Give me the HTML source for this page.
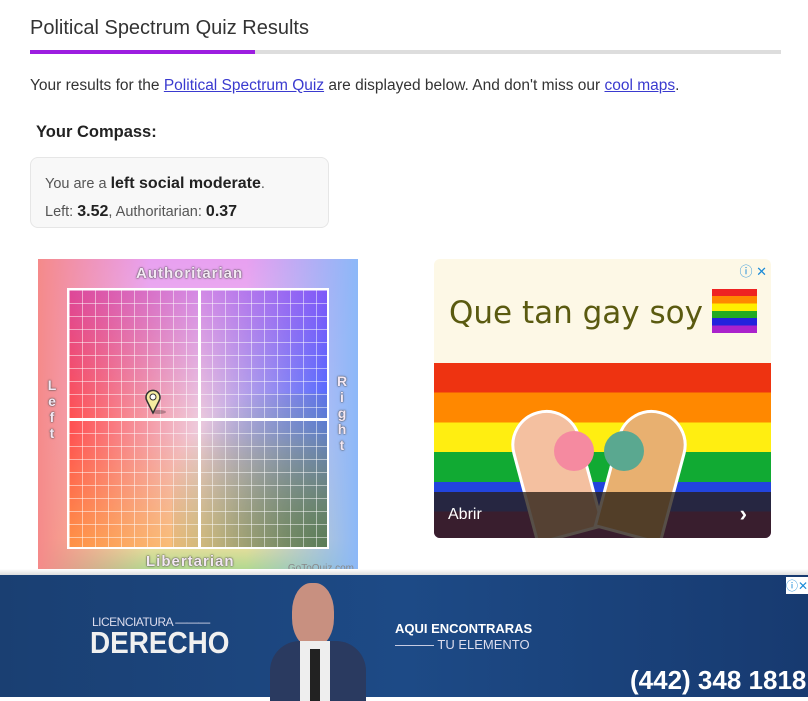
<!DOCTYPE html>
<html><head><meta charset="utf-8"><style>
*{margin:0;padding:0;box-sizing:border-box}
body{width:808px;height:697px;overflow:hidden;background:#fff;font-family:"Liberation Sans",Arial,sans-serif;color:#333;position:relative}
a{color:#3a3acf;text-decoration:underline}
.h{position:absolute;left:30px;top:17px;font-size:20px;color:#333}
.bar{position:absolute;left:30px;top:50px;width:751px;height:4px;background:#ddd}
.bar i{display:block;width:225px;height:4px;background:#9c1de0}
.p{position:absolute;left:30px;top:77px;font-size:15.5px;color:#333}
.yc{position:absolute;left:36px;top:123px;font-size:16.5px;font-weight:bold;color:#222}
.box{position:absolute;left:30px;top:157px;width:299px;height:71px;border:1px solid #e6e6e6;border-radius:8px;background:#f8f8f8;padding:12px 14px;font-size:14.5px;color:#555;line-height:27px}
.box b{color:#222;font-size:16px}
.cmp{position:absolute;left:38px;top:259px;width:320px;height:311px;background:linear-gradient(90deg,#f58a8a 0%,rgba(245,138,138,0) 35%,rgba(140,170,250,0) 65%,#8cb8f8 100%),linear-gradient(180deg,#e8a0f0 0%,#f0c8f0 50%,#f8e0a0 90%,#b0d890 100%)}
.lbl{position:absolute;font-weight:bold;color:#f4e8f4;font-size:15px;letter-spacing:1px;text-shadow:0 0 2px #555,0 0 1px #333}
.grid{position:absolute;left:29px;top:29px;width:262px;height:261px;border:2px solid #fff;overflow:hidden;
background:
linear-gradient(0deg,rgba(255,200,60,.55),rgba(255,200,60,0) 45%),
linear-gradient(180deg,rgba(180,60,240,.45),rgba(180,60,240,0) 50%),
linear-gradient(90deg,#ff5050,#eecadc 50%,#5070ff)}
.gl{position:absolute;inset:0;background:repeating-linear-gradient(90deg,rgba(255,255,255,.5) 0 1px,transparent 1px 13px),repeating-linear-gradient(180deg,rgba(255,255,255,.5) 0 1px,transparent 1px 13px)}
.ad{position:absolute;left:434px;top:259px;width:337px;height:279px;border-radius:6px;overflow:hidden;background:#fdf8e6}
.ban{position:absolute;left:0;top:575px;width:808px;height:122px;background:linear-gradient(90deg,#1a3f72,#1d4a86 50%,#173a70)}
</style></head><body>
<div class="h">Political Spectrum Quiz Results</div>
<div class="bar"><i></i></div>
<div class="p">Your results for the <a>Political Spectrum Quiz</a> are displayed below. And don't miss our <a>cool maps</a>.</div>
<div class="yc">Your Compass:</div>
<div class="box">You are a <b>left social moderate</b>.<br>Left: <b>3.52</b>, Authoritarian: <b>0.37</b></div>
<div class="cmp">
 <div class="lbl" style="left:98px;top:6px">Authoritarian</div>
 <div class="lbl" style="left:108px;top:294px">Libertarian</div>
 <div class="lbl" style="left:8px;top:118px;width:12px;line-height:16px;text-align:center;font-size:14px;letter-spacing:0">L<br>e<br>f<br>t</div>
 <div class="lbl" style="left:298px;top:114px;width:12px;line-height:16px;text-align:center;font-size:14px;letter-spacing:0">R<br>i<br>g<br>h<br>t</div>
 <div class="grid">
  <div style="position:absolute;right:0;bottom:0;width:60%;height:60%;background:radial-gradient(circle at 100% 100%,rgba(80,120,80,.9),rgba(120,150,100,.4) 50%,rgba(0,0,0,0) 80%)"></div>
  <div class="gl"></div>
  <div style="position:absolute;left:129px;top:0;width:3px;height:100%;background:#fff"></div>
  <div style="position:absolute;top:128px;left:0;height:3px;width:100%;background:#fff"></div>
  <svg style="position:absolute;left:75px;top:99px" width="24" height="26" viewBox="0 0 24 26"><ellipse cx="15" cy="23" rx="7" ry="2" fill="rgba(0,0,0,.25)"/><path d="M9 24 L3 12 A7 7 0 1 1 15 12 Z" fill="#f4eca0" stroke="#333" stroke-width="1.5"/><circle cx="9" cy="8" r="3" fill="#fff" stroke="#333"/></svg>
 </div>
 <div style="position:absolute;right:4px;bottom:-4px;font-size:10px;color:#888">GoToQuiz.com</div>
</div>
<div class="ad">
 <div style="position:absolute;right:4px;top:2px;font-size:13px;color:#1a8ad8">ⓘ ✕</div>
 <div style="position:absolute;left:15px;top:36px;font-size:31px;color:#5a5a10;font-family:'DejaVu Sans',sans-serif">Que tan gay soy</div>
 <div style="position:absolute;left:278px;top:30px;width:45px;height:44px;background:linear-gradient(#e22 0 16%,#f80 16% 33%,#fe0 33% 50%,#2a2 50% 66%,#22d 66% 83%,#a2c 83%)"></div>
 <div style="position:absolute;left:0;top:104px;width:337px;height:175px;background:linear-gradient(#e31 0 17%,#f80 17% 34%,#fe1 34% 51%,#1a3 51% 68%,#24d 68% 85%,#728 85%)"></div>
 <div style="position:absolute;left:85px;top:150px;width:70px;height:129px;border-radius:40px 40px 0 0;background:#f4c0a0;border:3px solid #fff;transform:rotate(-15deg)"></div>
 <div style="position:absolute;left:175px;top:150px;width:70px;height:129px;border-radius:40px 40px 0 0;background:#e8b070;border:3px solid #fff;transform:rotate(15deg)"></div>
 <div style="position:absolute;left:120px;top:172px;width:40px;height:40px;border-radius:50%;background:#f58aa0"></div>
 <div style="position:absolute;left:170px;top:172px;width:40px;height:40px;border-radius:50%;background:#5aa890"></div>
 <div style="position:absolute;left:0;top:233px;width:337px;height:46px;background:rgba(40,30,20,.78)"></div>
 <div style="position:absolute;left:14px;top:247px;font-size:16px;color:#fff">Abrir</div>
 <div style="position:absolute;right:24px;top:242px;font-size:22px;color:#fff;font-weight:bold">›</div>
</div>
<div style="position:absolute;left:0;top:569px;width:808px;height:6px;background:linear-gradient(#fff,#ddd)"></div>
<div class="ban">
 <div style="position:absolute;left:92px;top:40px;font-size:12px;color:#dde;letter-spacing:-.5px">LICENCIATURA ———</div>
 <div style="position:absolute;left:90px;top:50px;font-size:31px;font-weight:bold;color:#f0f0f0;transform:scaleX(.9);transform-origin:left">DERECHO</div>
 <div style="position:absolute;left:270px;top:8px;width:100px;height:114px;">
  <div style="position:absolute;left:22px;top:0;width:42px;height:64px;border-radius:45%;background:#c89080"></div>
  <div style="position:absolute;left:0;top:58px;width:96px;height:60px;border-radius:30px 30px 0 0;background:#2a3a60"></div>
  <div style="position:absolute;left:30px;top:58px;width:30px;height:60px;background:#eee"></div>
  <div style="position:absolute;left:40px;top:66px;width:10px;height:52px;background:#222"></div>
 </div>
 <div style="position:absolute;left:395px;top:46px;font-size:13px;font-weight:bold;color:#fff">AQUI ENCONTRARAS</div>
 <div style="position:absolute;left:395px;top:62px;font-size:13px;color:#dde">——— TU ELEMENTO</div>
 <div style="position:absolute;left:630px;top:90px;font-size:26px;font-weight:bold;color:#fff;white-space:nowrap">(442) 348 1818</div>
 <div style="position:absolute;right:0;top:2px;font-size:12px;color:#1a8ad8;background:#fff">ⓘ✕</div>
</div>
</body></html>
